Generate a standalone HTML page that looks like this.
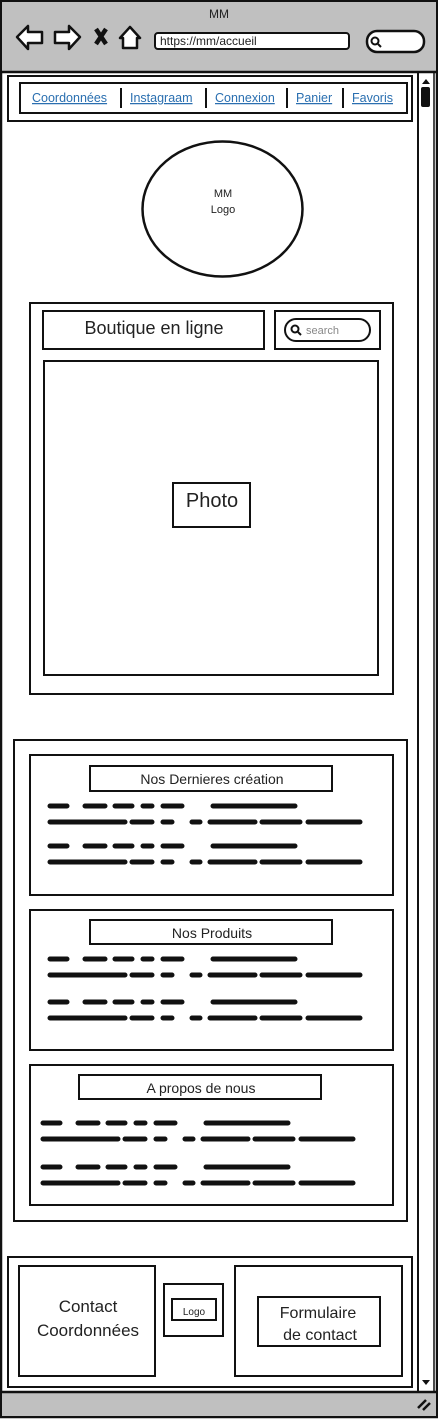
<!DOCTYPE html>
<html><head><meta charset="utf-8"><style>
html,body{margin:0;padding:0;background:#fff;width:438px;height:1419px;overflow:hidden}
svg{display:block}
text{font-family:"Liberation Sans",sans-serif;fill:#222}
</style></head><body>
<svg width="438" height="1419" viewBox="0 0 438 1419" xmlns="http://www.w3.org/2000/svg">
<defs>
<g id="pa">
<path d="M0 0h17M35 0h20M65 0h17M93 0h9M113 0h19M163 0h82" />
</g>
<g id="pb">
<path d="M0 0h75M82 0h20M113 0h9M142 0h8M160 0h45M212 0h38M258 0h52" />
</g>
</defs>
<rect x="1" y="1" width="436" height="1416" fill="#fff" stroke="#111" stroke-width="2.5"/>
<rect x="2" y="2" width="434" height="70" fill="#c0c0c0"/>
<line x1="2" y1="72" x2="436" y2="72" stroke="#111" stroke-width="2.5"/>
<rect x="2" y="1392" width="434" height="24" fill="#c0c0c0"/>
<line x1="2" y1="1392" x2="436" y2="1392" stroke="#111" stroke-width="2.5"/>
<path d="M418 1408l8-8M423 1410l7-7" stroke="#111" stroke-width="2.5"/>
<text x="219" y="18" font-size="12" text-anchor="middle" fill="#333">MM</text>
<g fill="#fff" stroke="#111" stroke-width="2.5" stroke-linejoin="round">
<path d="M17 37l11-11v6h14v11h-14v6z"/>
<path d="M80 37l-11-11v6h-14v11h14v6z"/>
<path d="M120 38l10-11 10 11h-3v10h-14v-10z"/>
</g>
<path d="M96 29l10 15M106 29l-10 15" stroke="#111" stroke-width="4.5"/>
<rect x="155" y="33" width="194" height="16" rx="3" fill="#fff" stroke="#111" stroke-width="2"/>
<text x="160" y="45" font-size="12" fill="#222">https://mm/accueil</text>
<rect x="367" y="31" width="57" height="21" rx="10" fill="#fff" stroke="#111" stroke-width="2.5"/>
<circle cx="375" cy="41" r="3.5" fill="none" stroke="#111" stroke-width="2"/>
<line x1="378" y1="44" x2="381" y2="47" stroke="#111" stroke-width="2"/>
<line x1="418" y1="72" x2="418" y2="1392" stroke="#111" stroke-width="2"/>
<line x1="434" y1="72" x2="434" y2="1392" stroke="#111" stroke-width="1.5"/>
<path d="M422 84l4-5 4 5z" fill="#111"/>
<rect x="421" y="87" width="9" height="20" rx="2" fill="#111"/>
<path d="M422 1380l4 5 4-5z" fill="#111"/>
<g fill="none" stroke="#111" stroke-width="2">
<rect x="8" y="76" width="404" height="45"/>
<rect x="20" y="83" width="387" height="30"/>
<path d="M121 88v20M206 88v20M287 88v20M343 88v20"/>
<ellipse cx="222.5" cy="209" rx="80" ry="67.5" stroke-width="2.5"/>
<rect x="30" y="303" width="363" height="391"/>
<rect x="43" y="311" width="221" height="38"/>
<rect x="275" y="311" width="105" height="38"/>
<rect x="285" y="319" width="85" height="22" rx="11"/>
<rect x="44" y="361" width="334" height="314"/>
<rect x="173" y="483" width="77" height="44"/>
<rect x="14" y="740" width="393" height="481"/>
<rect x="30" y="755" width="363" height="140"/>
<rect x="90" y="766" width="242" height="25"/>
<rect x="30" y="910" width="363" height="140"/>
<rect x="90" y="920" width="242" height="24"/>
<rect x="30" y="1065" width="363" height="140"/>
<rect x="79" y="1075" width="242" height="24"/>
<rect x="8" y="1257" width="404" height="130"/>
<rect x="19" y="1266" width="136" height="110"/>
<rect x="164" y="1284" width="59" height="52"/>
<rect x="172" y="1299" width="44" height="21"/>
<rect x="235" y="1266" width="167" height="110"/>
<rect x="258" y="1297" width="122" height="49"/>
</g>
<circle cx="295" cy="329" r="3.5" fill="none" stroke="#111" stroke-width="2"/>
<line x1="298" y1="332" x2="301" y2="335" stroke="#111" stroke-width="2"/>
<text x="306" y="334" font-size="11" style="fill:#888">search</text>
<g font-size="12.5">
<text x="32" y="102" style="fill:#2a6fb0;text-decoration:underline">Coordonnées</text>
<text x="130" y="102" style="fill:#2a6fb0;text-decoration:underline">Instagraam</text>
<text x="215" y="102" style="fill:#2a6fb0;text-decoration:underline">Connexion</text>
<text x="296" y="102" style="fill:#2a6fb0;text-decoration:underline">Panier</text>
<text x="352" y="102" style="fill:#2a6fb0;text-decoration:underline">Favoris</text>
</g>
<text x="223" y="197" font-size="11" text-anchor="middle">MM</text>
<text x="223" y="213" font-size="11" text-anchor="middle">Logo</text>
<text x="154" y="334" font-size="18" text-anchor="middle">Boutique en ligne</text>
<text x="212" y="507" font-size="20" text-anchor="middle">Photo</text>
<text x="212" y="784" font-size="14" text-anchor="middle">Nos Dernieres création</text>
<text x="212" y="938" font-size="14" text-anchor="middle">Nos Produits</text>
<text x="201" y="1093" font-size="14" text-anchor="middle">A propos de nous</text>
<text x="88" y="1312" font-size="17" text-anchor="middle">Contact</text>
<text x="88" y="1336" font-size="17" text-anchor="middle">Coordonnées</text>
<text x="194" y="1315" font-size="10" text-anchor="middle">Logo</text>
<text x="318" y="1318" font-size="16" text-anchor="middle">Formulaire</text>
<text x="320" y="1340" font-size="16" text-anchor="middle">de contact</text>
<g stroke="#111" stroke-width="5" stroke-linecap="round" fill="none">
<use href="#pa" transform="translate(50,806)"/>
<use href="#pb" transform="translate(50,822)"/>
<use href="#pa" transform="translate(50,846)"/>
<use href="#pb" transform="translate(50,862)"/>
<use href="#pa" transform="translate(50,959)"/>
<use href="#pb" transform="translate(50,975)"/>
<use href="#pa" transform="translate(50,1002)"/>
<use href="#pb" transform="translate(50,1018)"/>
<use href="#pa" transform="translate(43,1123)"/>
<use href="#pb" transform="translate(43,1139)"/>
<use href="#pa" transform="translate(43,1167)"/>
<use href="#pb" transform="translate(43,1183)"/>
</g>
</svg>
</body></html>
